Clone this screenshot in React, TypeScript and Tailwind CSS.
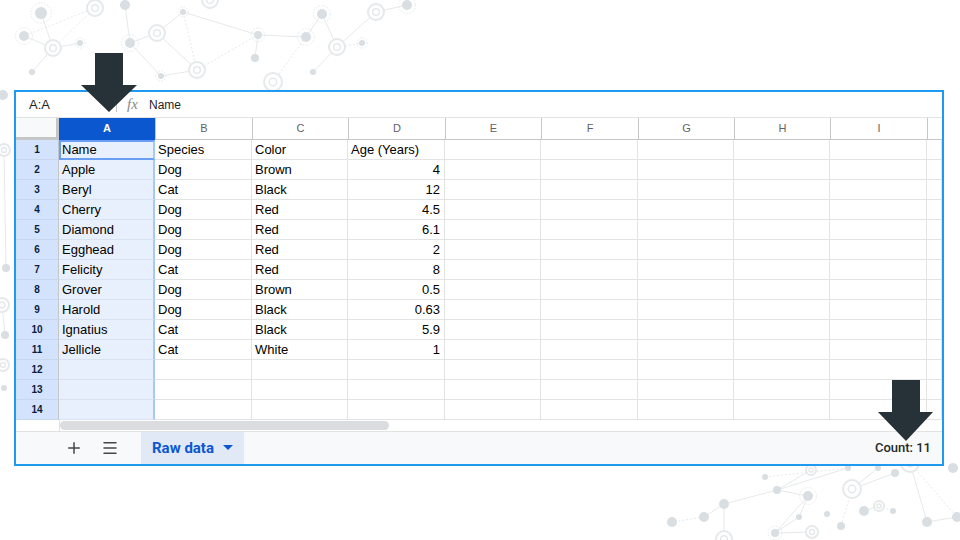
import { Plus, Menu } from "lucide-react";

const cols = [
  { l: "A", w: 96 },
  { l: "B", w: 97 },
  { l: "C", w: 96 },
  { l: "D", w: 97 },
  { l: "E", w: 96 },
  { l: "F", w: 97 },
  { l: "G", w: 96 },
  { l: "H", w: 96 },
  { l: "I", w: 97 },
  { l: "", w: 15 },
];

const rows: (string | number)[][] = [
  ["Name", "Species", "Color", "Age (Years)"],
  ["Apple", "Dog", "Brown", 4],
  ["Beryl", "Cat", "Black", 12],
  ["Cherry", "Dog", "Red", 4.5],
  ["Diamond", "Dog", "Red", 6.1],
  ["Egghead", "Dog", "Red", 2],
  ["Felicity", "Cat", "Red", 8],
  ["Grover", "Dog", "Brown", 0.5],
  ["Harold", "Dog", "Black", 0.63],
  ["Ignatius", "Cat", "Black", 5.9],
  ["Jellicle", "Cat", "White", 1],
  [],
  [],
  [],
];

// background network: [x, y, r, kind] kind 0 = filled dot, 1 = ring, 2 = dot with dashed halo
const nodes: [number, number, number, number][] = [
  [41, 13, 6, 2], [95, 8, 8, 1], [24, 36, 5, 2], [53, 48, 8, 1], [80, 43, 3, 2],
  [32, 72, 3, 0], [130, 43, 5, 2], [157, 33, 8, 1], [183, 12, 3, 2], [125, 5, 5, 0],
  [161, 76, 3, 2], [197, 70, 8, 1], [258, 35, 4, 2], [255, 58, 4, 0], [306, 37, 5, 2],
  [273, 82, 9, 1], [322, 14, 5, 2], [376, 12, 8, 1], [337, 47, 8, 1], [362, 43, 3, 2],
  [313, 72, 3, 0], [407, 5, 5, 2], [210, 0, 8, 1], [3, 95, 5, 0],
  [4, 150, 6, 1], [6, 268, 4, 0], [2, 305, 7, 1], [5, 335, 4, 0], [3, 365, 6, 1], [4, 388, 3, 0],
  [910, 463, 9, 1], [765, 477, 3, 0], [811, 470, 5, 1], [848, 468, 3, 0], [878, 468, 3, 0],
  [895, 473, 4, 0], [852, 489, 9, 1], [777, 490, 4, 0], [808, 496, 5, 2], [724, 504, 5, 0],
  [704, 517, 5, 0], [672, 522, 5, 0], [799, 517, 3, 0], [827, 514, 3, 0], [841, 526, 4, 0],
  [864, 511, 5, 0], [879, 506, 5, 1], [893, 511, 3, 0], [775, 533, 4, 2], [812, 532, 6, 1],
  [724, 539, 8, 1], [927, 522, 5, 0], [957, 517, 5, 0], [953, 468, 5, 0],
];

const links: [number, number][] = [
  [0, 3], [2, 3], [3, 4], [1, 3], [5, 3], [6, 7], [7, 8], [8, 11], [6, 10], [10, 11],
  [7, 11], [11, 12], [12, 8], [12, 13], [12, 14], [14, 15], [14, 16], [16, 18], [18, 17],
  [18, 19], [20, 18], [17, 21], [9, 6], [31, 33], [33, 37], [37, 39], [39, 40], [40, 41],
  [36, 34], [36, 35], [38, 42], [36, 44], [42, 48], [48, 49], [45, 46], [46, 47], [32, 37],
  [37, 38], [38, 48], [30, 52], [51, 52], [39, 50], [51, 30], [1, 2], [26, 27], [24, 25],
];

function Network() {
  return (
    <svg className="absolute inset-0" width="960" height="540" viewBox="0 0 960 540">
      {links.map(([a, b], i) => (
        <line
          key={i}
          x1={nodes[a][0]}
          y1={nodes[a][1]}
          x2={nodes[b][0]}
          y2={nodes[b][1]}
          stroke="#e6e9eb"
          strokeWidth="1"
          strokeDasharray={i % 4 === 3 ? "2 2" : undefined}
        />
      ))}
      {nodes.map(([x, y, r, k], i) =>
        k === 1 ? (
          <g key={i}>
            <circle cx={x} cy={y} r={r} fill="white" stroke="#e6e9eb" strokeWidth="2" />
            <circle cx={x} cy={y} r={r / 2.4} fill="none" stroke="#e6e9eb" strokeWidth="1.5" />
          </g>
        ) : (
          <g key={i}>
            {k === 2 && (
              <circle cx={x} cy={y} r={r * 1.7} fill="none" stroke="#e6e9eb" strokeDasharray="1.5 1.5" />
            )}
            <circle cx={x} cy={y} r={r} fill="#d8dee2" />
          </g>
        ),
      )}
    </svg>
  );
}

function Arrows() {
  return (
    <svg className="absolute inset-0 pointer-events-none" width="960" height="540" viewBox="0 0 960 540">
      <polygon points="95,53 123,53 123,85 137,85 109,112 81,85 95,85" fill="#263238" />
      <polygon points="892,380 920,380 920,412 933,412 906,441 878,412 892,412" fill="#263238" />
    </svg>
  );
}

export default function App() {
  return (
    <div
      className="relative w-[960px] h-[540px] overflow-hidden bg-white"
      style={{ fontFamily: "'Liberation Sans', Arial, sans-serif" }}
    >
      <Network />
      <div className="relative pt-[90px] pl-[14px]">
        <div className="w-[930px] border-2 border-[#1e9bf0] bg-white flex flex-col">
          {/* formula bar */}
          <div className="h-[25px] flex items-center text-[13px] text-[#1f1f1f]">
            <div className="w-[100px] pl-[13px]">A:A</div>
            <div className="w-px h-[14px] bg-[#c7c7c7]" />
            <div
              className="ml-[10px] w-[22px] text-[15px] italic text-[#8a8a8a]"
              style={{ fontFamily: "'Liberation Serif', serif" }}
            >
              fx
            </div>
            <div className="text-[12px]">Name</div>
          </div>

          {/* column headers */}
          <div className="flex h-[23px] text-[11px] text-[#5f6368] border-t border-[#e1e3e1]">
            <div className="w-[43px] bg-[#f8f9fa] border-r-[3px] border-b-[3px] border-[#c4c7c5]" />
            {cols.map((c, i) =>
              i === 0 ? (
                <div
                  key={c.l}
                  className="flex items-center justify-center bg-[#0b57d0] text-white font-bold border-b border-[#0b57d0]"
                  style={{ width: c.w }}
                >
                  {c.l}
                </div>
              ) : (
                <div
                  key={i}
                  className="flex items-center justify-center border-l border-b border-[#c4c7c5]"
                  style={{ width: c.w }}
                >
                  {c.l}
                </div>
              ),
            )}
          </div>

          {/* rows */}
          {rows.map((r, ri) => (
            <div key={ri} className="flex h-[20px] text-[13px] text-black">
              <div className="w-[43px] bg-[#d3e3fd] border-r border-[#c4c7c5] border-b border-b-[#c8d6ee] flex items-center justify-center text-[10px] font-bold text-[#0b1d3f]">
                {ri + 1}
              </div>
              {cols.map((c, ci) => {
                const v = r[ci];
                const num = typeof v === "number";
                if (ci === 0) {
                  return (
                    <div
                      key={ci}
                      className={
                        ri === 0
                          ? "bg-[#e8f0fe] border-2 border-[#6a9ef5] border-r-[#a8c7fa] flex items-center pl-[1px]"
                          : "bg-[#e8f0fe] border-r-2 border-r-[#a8c7fa] border-b border-b-[#d9e2f2] flex items-center pl-[3px]"
                      }
                      style={{ width: c.w }}
                    >
                      {v}
                    </div>
                  );
                }
                return (
                  <div
                    key={ci}
                    className={
                      "border-r border-b border-[#e2e3e3] flex items-center whitespace-nowrap overflow-hidden " +
                      (num ? "justify-end pr-[4px]" : "pl-[3px]")
                    }
                    style={{ width: c.w }}
                  >
                    {v}
                  </div>
                );
              })}
            </div>
          ))}

          {/* scrollbar row */}
          <div className="h-[11px] flex items-center">
            <div className="w-[44px] h-full border-r border-[#e1e3e1]" />
            <div className="w-[329px] h-[9px] rounded-full bg-[#dadce0]" />
          </div>

          {/* sheet bar */}
          <div className="h-[33px] bg-[#f8f9fa] border-t border-[#e1e3e1] flex items-center">
            <div className="w-[125px] flex items-center pl-[49px] gap-[18px] text-[#444746]">
              <Plus size={18} strokeWidth={2} />
              <Menu size={18} strokeWidth={2} />
            </div>
            <div
              className="h-full w-[103px] bg-[#e1e9f7] flex items-center pl-[11px] gap-[9px] text-[#0b57d0] text-[15px] font-bold"
              style={{ fontFamily: "Roboto, sans-serif" }}
            >
              Raw data
              <svg width="10" height="6" viewBox="0 0 10 6">
                <polygon points="0,0 10,0 5,5" fill="#0b57d0" />
              </svg>
            </div>
            <div
              className="ml-auto pr-[11px] text-[13px] font-medium text-[#1f2a1f]"
              style={{ fontFamily: "Roboto, sans-serif" }}
            >
              Count: 11
            </div>
          </div>
        </div>
      </div>
      <Arrows />
    </div>
  );
}
